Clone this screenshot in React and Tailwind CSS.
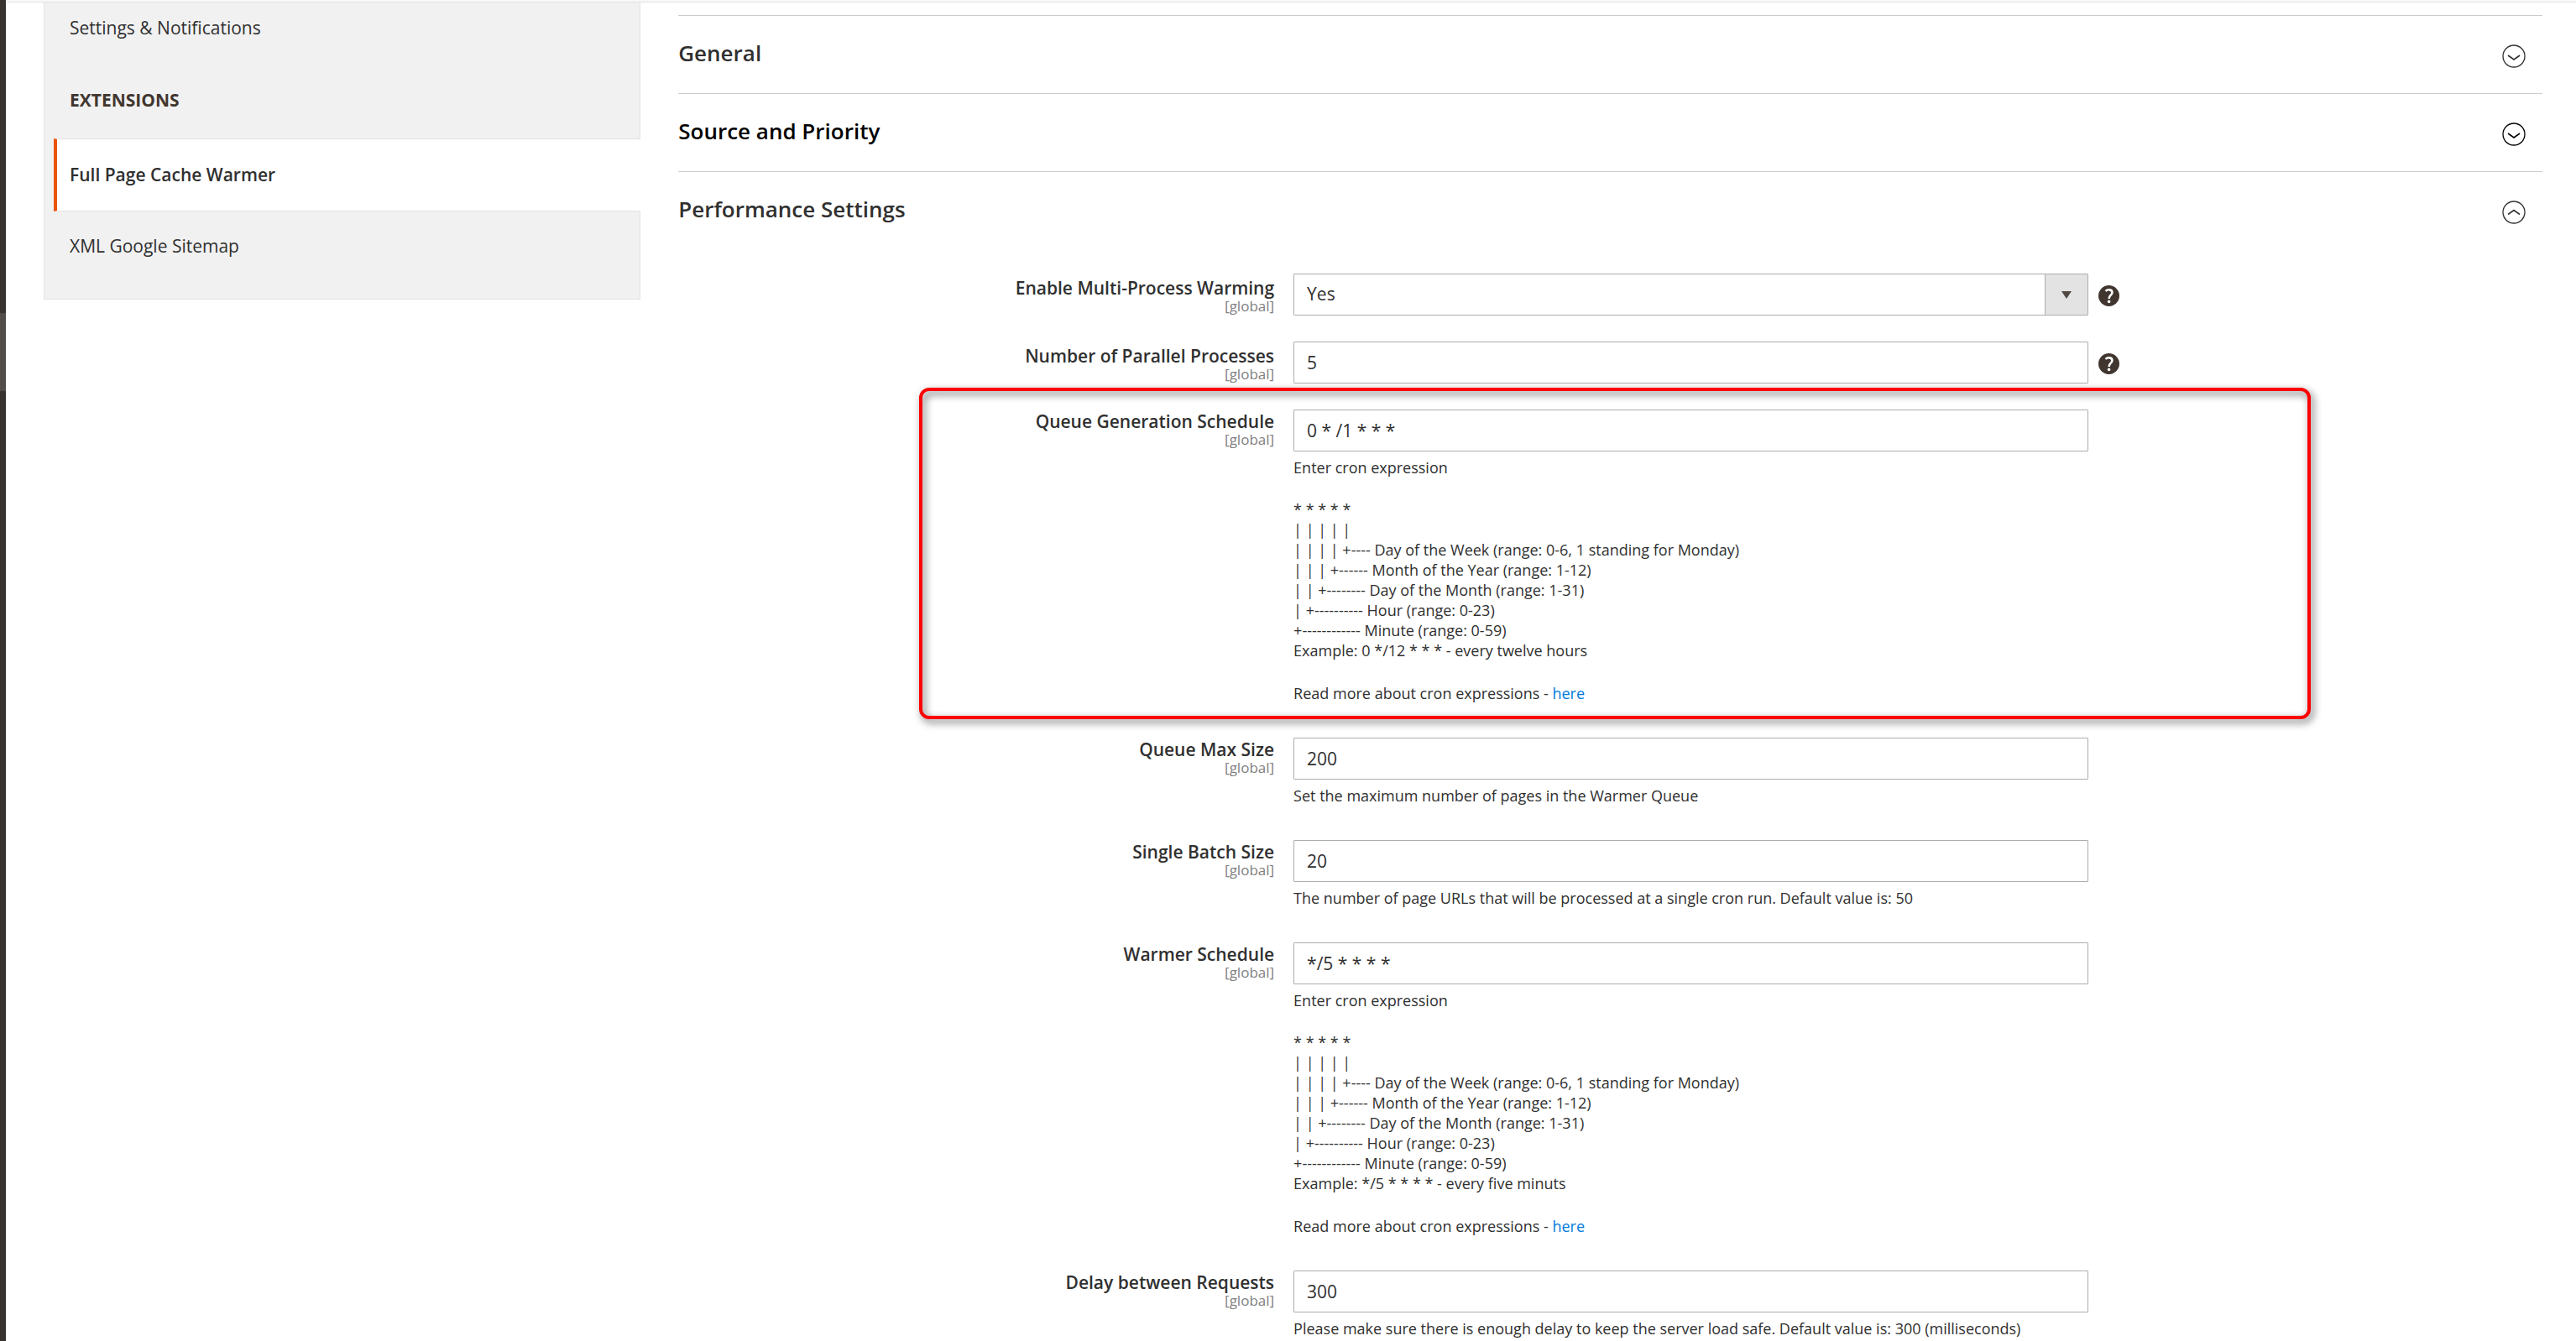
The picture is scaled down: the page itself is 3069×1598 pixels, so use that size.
import { useId } from "react";

const CRON_LINES = [
  "* * * * *",
  "| | | | |",
  "| | | | +---- Day of the Week (range: 0-6, 1 standing for Monday)",
  "| | | +------ Month of the Year (range: 1-12)",
  "| | +-------- Day of the Month (range: 1-31)",
  "| +---------- Hour (range: 0-23)",
  "+------------ Minute (range: 0-59)",
];

function CircleChevron({ up }) {
  return (
    <svg viewBox="0 0 28 28" className="mt-1 size-7" fill="none" stroke="currentColor" strokeWidth="1.3" aria-hidden="true">
      <circle cx="14" cy="14" r="13" />
      <path d={up ? "M7 16.5 L14 11.5 L21 16.5" : "M7 13 L14 18 L21 13"} strokeWidth="1.6" />
    </svg>
  );
}

function Section({ title, open, dark, children }) {
  return (
    <section className="border-t border-[#cccccc]">
      <h2>
        <button
          type="button"
          aria-expanded={!!open}
          className={
            "flex h-[92px] w-full items-center justify-between pr-5 text-left text-[26px] font-semibold " +
            (dark ? "text-black" : "text-[#303030]")
          }
        >
          <span className="pb-1 leading-8">{title}</span>
          <CircleChevron up={open} />
        </button>
      </h2>
      {children}
    </section>
  );
}

function HelpButton({ label }) {
  return (
    <button type="button" aria-label={"Help: " + label} className="mt-3.5 size-[25px] text-[#41362f]">
      <svg viewBox="0 0 25 25" className="size-full" aria-hidden="true">
        <circle cx="12.5" cy="12.5" r="12.5" fill="currentColor" />
        <path
          d="M8.6 7 C11 4.2 16.6 4.8 16.4 8.8 C16.2 11.8 12.6 11.8 12.6 16"
          fill="none"
          stroke="white"
          strokeWidth="2.6"
        />
        <circle cx="12.6" cy="19.4" r="1.8" fill="white" />
      </svg>
    </button>
  );
}

const CONTROL =
  "h-[50px] w-full appearance-none rounded-[1px] border border-[#adadad] bg-white px-[15px] text-[21px] text-[#303030] outline-none";

function Field({ label, value, select, help, marked, children }) {
  const id = useId();
  return (
    <div className="relative flex items-start">
      <label htmlFor={id} className={"flex w-[33%] flex-col pr-[23px] text-right " + (help ? "pt-[3px]" : "pt-0")}>
        <span className="text-[21px] leading-7 font-semibold text-[#303030]">{label}</span>
        <span className="text-[17px] leading-4 text-[#808080]">[global]</span>
      </label>
      <div className="w-[44%] pr-[30px]">
        {select ? (
          <div className="relative">
            <select id={id} defaultValue={value} className={CONTROL}>
              <option>Yes</option>
              <option>No</option>
            </select>
            <span className="pointer-events-none absolute inset-y-px right-px flex w-[51px] items-center justify-center border-l border-[#adadad] bg-[#e3e3e3]">
              <svg viewBox="0 0 12 9" className="h-[9px] w-3" aria-hidden="true">
                <path d="M0 0H12L6 9Z" fill="#514943" />
              </svg>
            </span>
          </div>
        ) : (
          <input id={id} type="text" defaultValue={value} className={CONTROL} />
        )}
        {children && <div className="mt-[7px] mb-2.5 text-[18px] leading-6 text-[#303030]">{children}</div>}
      </div>
      {help && (
        <div className="-ml-[18px]">
          <HelpButton label={label} />
        </div>
      )}
      {marked && (
        <div className="pointer-events-none absolute -top-[26px] right-[276px] -bottom-[9px] left-[287px] rounded-xl border-4 border-[#ff0000] drop-shadow-[3px_4px_5px_rgba(0,0,0,0.65)]" />
      )}
    </div>
  );
}

function CronNote({ example }) {
  return (
    <>
      <p>Enter cron expression</p>
      <div className="mt-[26px]">
        {CRON_LINES.map((line) => (
          <p key={line}>{line}</p>
        ))}
        <p>{example}</p>
      </div>
      <p className="mt-[27px]">
        Read more about cron expressions -{" "}
        <a href="#cron" className="text-[#007bdb]">
          here
        </a>
      </p>
    </>
  );
}

export default function App() {
  return (
    <div className="flex min-h-screen bg-white font-['Open_Sans','Noto_Sans',sans-serif] text-[#303030]">
      <div className="w-[7px] shrink-0 bg-[#373330] pt-[373px]">
        <div className="h-[93px] bg-[#524d49]" />
      </div>
      <div className="min-w-0 flex-1">
        <div className="h-[3px] border-b border-[#e3e3e3] bg-[#f8f8f8]" />
        <div className="flex items-start pr-10 pl-[45px]">
          <div className="w-1/4 pr-[33px]">
            <nav className="border border-t-0 border-[#e3e3e3] bg-[#f1f1f1] pb-[49px] text-[21px] leading-7">
              <a href="#settings" className="block pt-4 pl-[30px]">
                Settings &amp; Notifications
              </a>
              <h3 className="pt-[58px] pb-[32px] pl-[30px] font-bold text-[#41362f]">EXTENSIONS</h3>
              <a
                href="#warmer"
                aria-current="page"
                className="-mr-px ml-[11px] block border-y border-l-4 border-y-[#e3e3e3] border-l-[#eb5202] bg-white pt-7 pb-[29px] pl-[15px] font-semibold"
              >
                Full Page Cache Warmer
              </a>
              <a href="#sitemap" className="block pt-[27px] pl-[30px]">
                XML Google Sitemap
              </a>
            </nav>
          </div>
          <main className="w-3/4 pt-[15px] pl-3">
            <Section title="General" />
            <Section title="Source and Priority" dark />
            <Section title="Performance Settings" open>
              <div className="flex flex-col gap-[31px] pt-[29px]">
                <Field label="Enable Multi-Process Warming" value="Yes" select help />
                <Field label="Number of Parallel Processes" value="5" help />
                <Field label="Queue Generation Schedule" value="0 * /1 * * *" marked>
                  <CronNote example="Example: 0 */12 * * * - every twelve hours" />
                </Field>
                <Field label="Queue Max Size" value="200">
                  <p>Set the maximum number of pages in the Warmer Queue</p>
                </Field>
                <Field label="Single Batch Size" value="20">
                  <p>The number of page URLs that will be processed at a single cron run. Default value is: 50</p>
                </Field>
                <Field label="Warmer Schedule" value="*/5 * * * *">
                  <CronNote example="Example: */5 * * * * - every five minuts" />
                </Field>
                <Field label="Delay between Requests" value="300">
                  <p>
                    Please make sure there is enough delay to keep the server load safe. Default value is: 300
                    (milliseconds)
                  </p>
                </Field>
              </div>
            </Section>
          </main>
        </div>
      </div>
    </div>
  );
}
